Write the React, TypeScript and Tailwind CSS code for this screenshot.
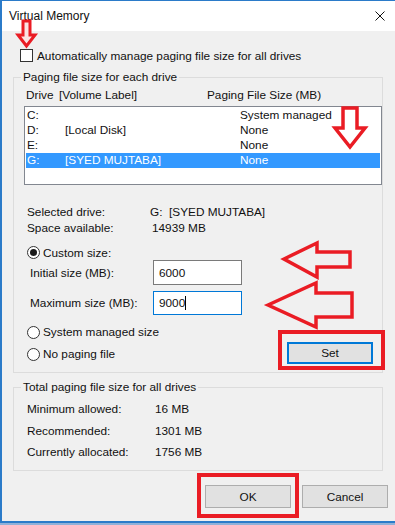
import React from "react";

const Radio = ({ checked }: { checked?: boolean }) => (
  <span className="w-[13px] h-[13px] rounded-full border border-[#333333] bg-white flex items-center justify-center shrink-0">
    {checked && <span className="w-[7px] h-[7px] rounded-full bg-[#1a1a1a]" />}
  </span>
);

const Btn = ({ label }: { label: string }) => (
  <div className="w-[86px] h-[23px] flex items-center justify-center bg-[#e1e1e1] border border-[#adadad]">
    {label}
  </div>
);

export default function App() {
  const rows = [
    { d: "C:", l: "", s: "System managed", sel: false },
    { d: "D:", l: "[Local Disk]", s: "None", sel: false },
    { d: "E:", l: "", s: "None", sel: false },
    { d: "G:", l: "[SYED MUJTABA]", s: "None", sel: true },
  ];
  return (
    <div className="w-[395px] h-[525px] overflow-hidden relative bg-[#8fb1d9] font-['Liberation_Sans',Arial,sans-serif] text-[11.8px] leading-[16px] text-[#111111]">
      <div className="w-[395px] h-[523px] border-l-2 border-t border-b-2 border-[#2b7bc9] bg-[#f0f0f0] flex flex-col">
        {/* title bar */}
        <div className="h-[30px] bg-white flex items-center justify-between pl-[7px] pr-[10px] shrink-0">
          <span className="text-[12px]">Virtual Memory</span>
          <svg width="10" height="10" viewBox="0 0 10 10">
            <line x1="0.5" y1="0.5" x2="9.5" y2="9.5" stroke="#111" strokeWidth="1" />
            <line x1="9.5" y1="0.5" x2="0.5" y2="9.5" stroke="#111" strokeWidth="1" />
          </svg>
        </div>

        <div className="flex flex-col pl-[11px]">
          {/* checkbox */}
          <div className="mt-[18px] h-[13px] flex items-center pl-[7px] gap-[4px]">
            <span className="w-[13px] h-[13px] border border-[#333333] bg-white shrink-0" />
            <span>Automatically manage paging file size for all drives</span>
          </div>

          {/* group 1 */}
          <fieldset className="mt-[7px] w-[370px] border border-[#dcdcdc] pb-[8px]">
            <legend className="ml-[7px] px-[2px] leading-[16px]">Paging file size for each drive</legend>
            <div className="mt-[2px] flex pl-[12px] h-[16px] items-center">
              <span className="w-[33px]">Drive</span>
              <span className="w-[148px]">[Volume Label]</span>
              <span>Paging File Size (MB)</span>
            </div>
            <div className="mt-[3px] ml-[10px] w-[358px] h-[79px] border border-[#828790] bg-white px-[1px] pt-[1px]">
              {rows.map((r) => (
                <div
                  key={r.d}
                  className={
                    "h-[15px] leading-[15px] flex pl-[1px] " +
                    (r.sel ? "bg-[#3399ff] text-white" : "")
                  }
                >
                  <span className="w-[38px]">{r.d}</span>
                  <span className="w-[175px]">{r.l}</span>
                  <span>{r.s}</span>
                </div>
              ))}
            </div>

            <div className="mt-[19px] flex pl-[13px] h-[16px] items-center">
              <span className="w-[123px]">Selected drive:</span>
              <span className="whitespace-pre">G:  [SYED MUJTABA]</span>
            </div>
            <div className="flex pl-[13px] h-[16px] items-center">
              <span className="w-[125px]">Space available:</span>
              <span>14939 MB</span>
            </div>

            <div className="mt-[9px] flex items-center gap-[3px] pl-[13px] h-[15px]">
              <Radio checked />
              <span>Custom size:</span>
            </div>
            <div className="flex items-center pl-[16px] h-[25px]">
              <span className="w-[123px]">Initial size (MB):</span>
              <div className="w-[89px] h-[25px] border border-[#7a7a7a] bg-white pl-[5px] flex items-center">
                6000
              </div>
            </div>
            <div className="mt-[6px] flex items-center pl-[16px] h-[24px]">
              <span className="w-[123px]">Maximum size (MB):</span>
              <div className="w-[89px] h-[24px] border border-[#0078d7] bg-white pl-[5px] flex items-center">
                9000<span className="w-[1px] h-[14px] bg-black" />
              </div>
            </div>

            <div className="mt-[9px] flex items-center gap-[3px] pl-[13px] h-[16px]">
              <Radio />
              <span>System managed size</span>
            </div>
            <div className="mt-[2px] flex items-center justify-between pl-[13px] pr-[9px] h-[22px]">
              <div className="flex items-center gap-[3px] mt-[2px]">
                <Radio />
                <span>No paging file</span>
              </div>
              <div className="w-[86px] h-[22px] flex items-center justify-center bg-[#e1e1e1] border-2 border-[#0078d7]">
                Set
              </div>
            </div>
          </fieldset>

          {/* group 2 */}
          <fieldset className="mt-[6px] w-[370px] border border-[#dcdcdc] pb-[10px]">
            <legend className="ml-[7px] px-[2px] leading-[16px]">Total paging file size for all drives</legend>
            <div className="mt-[6px] flex pl-[13px] h-[16px] items-center">
              <span className="w-[128px]">Minimum allowed:</span>
              <span>16 MB</span>
            </div>
            <div className="mt-[6px] flex pl-[13px] h-[16px] items-center">
              <span className="w-[128px]">Recommended:</span>
              <span>1301 MB</span>
            </div>
            <div className="mt-[5px] flex pl-[13px] h-[16px] items-center">
              <span className="w-[128px]">Currently allocated:</span>
              <span>1756 MB</span>
            </div>
          </fieldset>
        </div>

        <div className="mt-[14px] flex justify-end gap-[11px] pr-[7px]">
          <Btn label="OK" />
          <Btn label="Cancel" />
        </div>
      </div>

      {/* red annotations */}
      <svg
        className="absolute left-0 top-0 pointer-events-none"
        width="395"
        height="525"
        viewBox="0 0 395 525"
      >
        <polygon
          points="23,21 30,21 30,35 35,35 26.5,46 18,35 23,35"
          fill="#fbe3e3"
          stroke="#ea1c24"
          strokeWidth="3"
        />
        <polygon
          points="343,108 357,108 357,128 365,128 350,147 335,128 343,128"
          fill="white"
          stroke="#ea1c24"
          strokeWidth="3.5"
        />
        <polygon
          points="284,259 317,243 317,252 350,252 350,267 317,267 317,277"
          fill="none"
          stroke="#ea1c24"
          strokeWidth="3.5"
        />
        <polygon
          points="268,305 316,283 316,293 352,293 352,317 316,317 316,327"
          fill="none"
          stroke="#ea1c24"
          strokeWidth="3.5"
        />
        <rect x="280" y="332" width="103" height="36" fill="none" stroke="#ea1c24" strokeWidth="4" />
        <rect x="199" y="475" width="98" height="41" fill="none" stroke="#ea1c24" strokeWidth="4" />
      </svg>
    </div>
  );
}
